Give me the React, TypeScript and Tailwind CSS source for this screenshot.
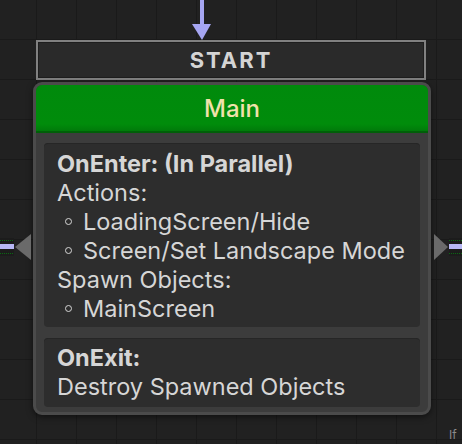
import React from 'react';

const font = { fontFamily: 'Inter, "Noto Sans", sans-serif' };

function Bullet({ label }: { label: string }) {
  return (
    <div className="flex items-center">
      <span className="ml-[8px] mr-[11px] h-[7px] w-[7px] rounded-full border-[1.5px] border-[#d6d6d6]" />
      <span>{label}</span>
    </div>
  );
}

function Port({ side }: { side: 'left' | 'right' }) {
  const left = side === 'left';
  return (
    <svg
      width="16"
      height="26"
      viewBox="0 0 16 26"
      className={`absolute top-[234px] ${left ? 'left-[15px]' : 'left-[434px]'}`}
    >
      <path d={left ? 'M16 0 L0 13 L16 26 Z' : 'M0 0 L14 13 L0 26 Z'} fill="#6a6a6a" />
    </svg>
  );
}

function Wire({ side }: { side: 'left' | 'right' }) {
  const left = side === 'left';
  return (
    <svg
      width="14"
      height="18"
      viewBox="0 0 14 18"
      className={`absolute top-[238px] ${left ? 'left-0' : 'left-[449px]'}`}
    >
      <rect x="0" y="0" width="14" height="18" fill="#1c1c1c" />
      <line x1="0" y1="2.5" x2="14" y2="2.5" stroke="#0a6a12" strokeWidth="1" strokeDasharray="1 1" />
      <line x1="0" y1="15.5" x2="14" y2="15.5" stroke="#0a6a12" strokeWidth="1" strokeDasharray="1 1" />
      <rect x="0" y="6" width="14" height="5" fill="#b8b8f6" />
    </svg>
  );
}

export default function App() {
  return (
    <div
      className="relative h-[444px] w-[462px] overflow-hidden bg-[#212121] bg-[linear-gradient(to_right,#1a1a1a_1px,transparent_1px),linear-gradient(to_bottom,#1a1a1a_1px,transparent_1px)] bg-[size:40px_40px] bg-[position:36px_39px]"
      style={font}
    >
      <div className="flex flex-col">
        {/* incoming transition arrow */}
        <div className="pl-[192px]">
          <svg width="20" height="40" viewBox="0 0 20 40" className="block">
            <rect x="8" y="0" width="4" height="26" fill="#a6a6f2" />
            <path d="M0 24 L19 24 L10 40 Z" fill="#a6a6f2" />
          </svg>
        </div>

        {/* START marker */}
        <div className="mx-[36px] flex h-[40px] items-center justify-center border-2 border-[#818181] bg-[#2a2a2a] shadow-[inset_0_0_0_1px_#1e1e1e]">
          <span className="pt-[1px] text-[22px] font-bold tracking-[2px] text-[#d4d4d4]">START</span>
        </div>

        {/* state node */}
        <div className="ml-[33px] mt-[2px] w-[398px] rounded-[9px] border-[3px] border-[#4b4b4b] bg-[#3c3c3c] shadow-[0_2px_6px_rgba(0,0,0,0.5)]">
          <div className="flex h-[48px] items-center justify-center rounded-t-[6px] border-b-2 border-[#005f08] bg-[linear-gradient(to_bottom,#008a0c,#008c0b_85%,#007a0a)]">
            <span className="pt-[2px] text-[24px] font-medium text-[#f0e2aa]">Main</span>
          </div>

          <div className="flex flex-col gap-[11px] px-[8px] pb-[5px] pt-[10px] text-[23.5px] leading-[29px] text-[#d6d6d6]">
            <div className="rounded-[4px] bg-[#2d2d2d] pb-[4px] pl-[13px] pt-[6px] shadow-[inset_0_1px_0_#262626]">
              <div className="font-bold">OnEnter: (In Parallel)</div>
              <div>Actions:</div>
              <Bullet label="LoadingScreen/Hide" />
              <Bullet label="Screen/Set Landscape Mode" />
              <div>Spawn Objects:</div>
              <Bullet label="MainScreen" />
            </div>

            <div className="rounded-[4px] bg-[#2d2d2d] pb-[6px] pl-[13px] pt-[5px] shadow-[inset_0_1px_0_#262626]">
              <div className="font-bold">OnExit:</div>
              <div>Destroy Spawned Objects</div>
            </div>
          </div>
        </div>
      </div>

      <Port side="left" />
      <Port side="right" />
      <Wire side="left" />
      <Wire side="right" />

      <span className="absolute left-[449px] top-[428px] text-[12px] leading-[14px] text-[#8a8a8a]">If</span>
    </div>
  );
}
